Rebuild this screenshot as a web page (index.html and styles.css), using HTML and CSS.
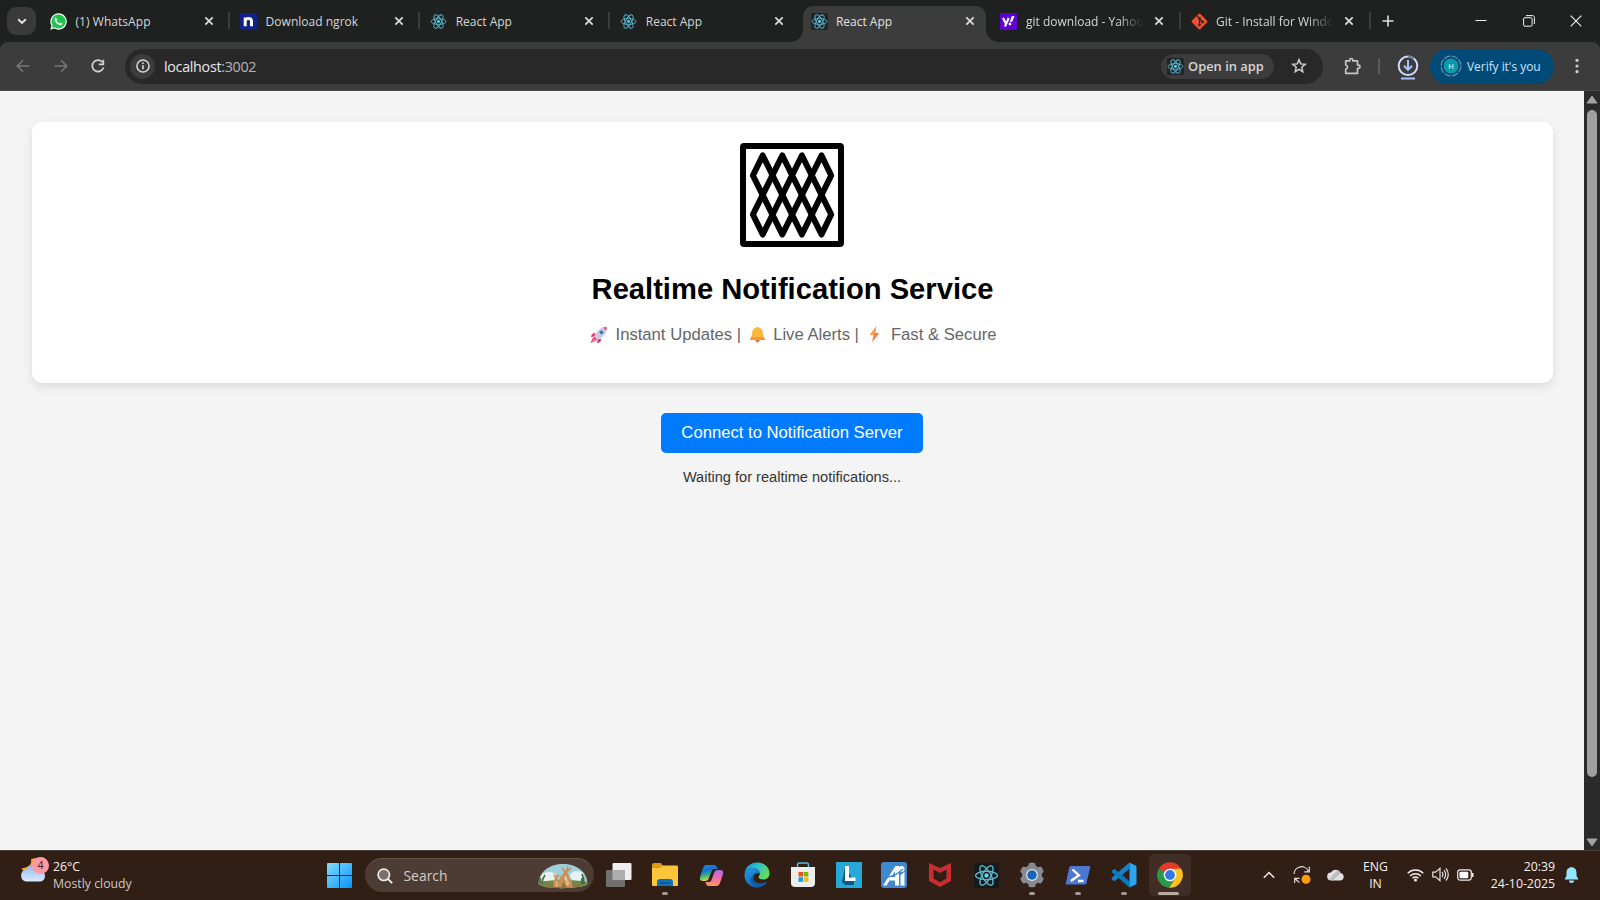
FILE: index.html
```html
<!DOCTYPE html>
<html lang="en">
<head>
<meta charset="utf-8">
<title>React App</title>
<link rel="stylesheet" href="styles.css">
</head>
<body>
<svg class="defs" width="0" height="0" aria-hidden="true">
  <symbol id="react" viewBox="0 0 16 16">
    <g fill="none" stroke="#58b9d2" stroke-width=".85">
      <ellipse cx="8" cy="8" rx="7" ry="2.7"/>
      <ellipse cx="8" cy="8" rx="7" ry="2.7" transform="rotate(60 8 8)"/>
      <ellipse cx="8" cy="8" rx="7" ry="2.7" transform="rotate(120 8 8)"/>
    </g>
    <circle cx="8" cy="8" r="1.4" fill="#6fd0e8"/>
  </symbol>
  <symbol id="close" viewBox="0 0 10 10"><path d="M1.3 1.3l7.4 7.4M8.7 1.3L1.3 8.7" stroke="#dcdcdc" stroke-width="1.7" fill="none"/></symbol>
</svg>

<header class="tabstrip">
  <button class="tab-search"><svg width="10" height="7" viewBox="0 0 10 7"><path d="M1.2 1.3L5 5l3.800-3.700" fill="none" stroke="#e6e6e6" stroke-width="1.900"/></svg></button>
  <nav class="tabs">
    <div class="tab">
      <svg class="fav" viewBox="0 0 17 17"><path d="M8.500.3a8.200 8.200 0 0 0-7.100 12.300L.3 16.700l4.200-1.100A8.200 8.200 0 1 0 8.500.3z" fill="#f2fff4"/><path d="M8.500 1.500a7 7 0 0 0-5.800 10.900L2 15l2.700-.7A7 7 0 1 0 8.500 1.500z" fill="#1fc24d"/><path d="M5.900 4.400c-.8.3-1.500 1.300-1.200 2.500.6 2.500 2.800 4.700 5.300 5.300 1.200.2 2.300-.5 2.400-1.700l-2-1.100-1 1c-1.300-.5-2.200-1.400-2.800-2.700l.8-.9z" fill="#fff"/></svg>
      <span class="tab-title t-wa">(1) WhatsApp</span><svg class="x"><use href="#close"/></svg><i class="sep"></i>
    </div>
    <div class="tab">
      <svg class="fav" viewBox="0 0 17 17"><rect width="17" height="17" rx="1" fill="#10218b"/><path d="M5.200 13.200V4.600M5.200 7.800c.5-3.100 6.300-3.400 6.300.4v5" fill="none" stroke="#fff" stroke-width="3"/></svg>
      <span class="tab-title t-ng">Download ngrok</span><svg class="x"><use href="#close"/></svg><i class="sep"></i>
    </div>
    <div class="tab"><svg class="fav"><use href="#react"/></svg><span class="tab-title">React App</span><svg class="x"><use href="#close"/></svg><i class="sep"></i></div>
    <div class="tab"><svg class="fav"><use href="#react"/></svg><span class="tab-title">React App</span><svg class="x"><use href="#close"/></svg></div>
    <div class="tab active"><svg class="fav dark"><use href="#react"/></svg><span class="tab-title">React App</span><svg class="x"><use href="#close"/></svg></div>
    <div class="tab">
      <svg class="fav" viewBox="0 0 17 17"><rect width="17" height="17" rx="1" fill="#6001d2"/><path d="M3 5l2.700 5.300M8.700 5L5 13.500" fill="none" stroke="#fff" stroke-width="2.100"/><path d="M11.900 3h2.600l-2.300 5.800H9.800z" fill="#fff"/><circle cx="10" cy="11" r="1.400" fill="#fff"/></svg>
      <span class="tab-title fade">git download - Yahoo</span><svg class="x"><use href="#close"/></svg><i class="sep"></i>
    </div>
    <div class="tab">
      <svg class="fav" viewBox="0 0 17 17"><rect x="2.600" y="2.600" width="11.800" height="11.800" rx="1" transform="rotate(45 8.500 8.500)" fill="#f05033"/><path d="M6 2.800l2.500 2.500v7M8.500 6l3 3" fill="none" stroke="#32221f" stroke-width="1.100"/><g fill="#32221f"><circle cx="8.500" cy="5.500" r="1.400"/><circle cx="8.500" cy="12" r="1.400"/><circle cx="11.500" cy="9" r="1.400"/></g></svg>
      <span class="tab-title fade">Git - Install for Windo</span><svg class="x"><use href="#close"/></svg><i class="sep"></i>
    </div>
  </nav>
  <svg class="plus" width="12" height="12" viewBox="0 0 12 12"><path d="M6 .5v11M.5 6h11" stroke="#dedede" stroke-width="1.600"/></svg>
  <div class="winctl">
    <svg width="12" height="12" viewBox="0 0 12 12"><path d="M.5 5.500h11" stroke="#f2f2f2"/></svg>
    <svg width="12" height="12" viewBox="0 0 12 12"><g fill="none" stroke="#f2f2f2"><rect x=".6" y="2.700" width="8.500" height="8.500" rx="1.300"/><path d="M3 .6h6.500c1.200 0 1.900.7 1.900 1.900V9"/></g></svg>
    <svg width="12" height="12" viewBox="0 0 12 12"><path d="M.7.7l10.600 10.600M11.300.7L.7 11.300" stroke="#f2f2f2" stroke-width="1.100"/></svg>
  </div>
</header>

<section class="toolbar">
  <div class="navbtns">
    <svg width="14" height="14" viewBox="0 0 14 14"><path d="M13.300 7H1.300M7 1.200L1.200 7 7 12.800" fill="none" stroke="#777" stroke-width="1.500"/></svg>
    <svg width="14" height="14" viewBox="0 0 14 14"><path d="M.7 7h12M7 1.200L12.800 7 7 12.800" fill="none" stroke="#777" stroke-width="1.500"/></svg>
    <svg width="14" height="14" viewBox="0 0 14 14"><path d="M11.700 3.600A5.700 5.700 0 1 0 12.500 8.500" fill="none" stroke="#d2d2d2" stroke-width="1.700"/><path d="M13.200.7v5.500H7.800V4.600h3.800V.7z" fill="#d2d2d2"/></svg>
  </div>
  <div class="omnibox">
    <span class="info"><svg width="14" height="14" viewBox="0 0 14 14"><circle cx="7" cy="7" r="6.100" fill="none" stroke="#d8d8d8" stroke-width="1.500"/><path d="M7 6.300v4M7 3.400v1.500" stroke="#d8d8d8" stroke-width="1.600"/></svg></span>
    <span class="url">localhost<b>:3002</b></span>
    <button class="openapp"><svg class="fav dark"><use href="#react"/></svg><span>Open in app</span></button>
    <svg class="star" width="16" height="16" viewBox="0 0 16 16"><path d="M8 1.700l1.700 4.200 4.500.4-3.400 3 1 4.400L8 11.400l-3.800 2.300 1-4.400-3.400-3 4.500-.4z" fill="none" stroke="#cfcfcf" stroke-width="1.500"/></svg>
  </div>
  <svg class="ext" width="18" height="18" viewBox="0 0 18 18"><path d="M1.700 3.800h4.100V3a1.500 1.500 0 0 1 3 0v.8h4.700v4.300h.9a1.600 1.600 0 0 1 0 3.200h-.9v5H1.700v-4.100c2.400-.3 2.400-3.900 0-4.200z" fill="none" stroke="#c6c6c6" stroke-width="1.700" stroke-linejoin="round"/></svg>
  <i class="tsep"></i>
  <svg class="dl" width="22" height="25" viewBox="0 0 22 25"><circle cx="11" cy="10.800" r="9.300" fill="none" stroke="#d0dcff" stroke-width="2"/><path d="M11 1.500a9.300 9.300 0 0 1 6 2.100" fill="none" stroke="#777d8c" stroke-width="2"/><path d="M11 5v9.500M6.900 10.700l4.100 4.100 4.100-4.100" fill="none" stroke="#a8c3ff" stroke-width="2"/><path d="M4 23.500h14" stroke="#a8c3ff" stroke-width="2"/></svg>
  <button class="verify"><span class="avatar"><svg width="22" height="22" viewBox="0 0 22 22"><circle cx="11" cy="11" r="9.900" fill="none" stroke="#6b8da8" stroke-width="1.300" stroke-dasharray="6.500 1.300"/><circle cx="11" cy="11" r="7.500" fill="#0c99a8"/></svg><em>H</em></span><span class="vtext">Verify it's you</span></button>
  <svg class="more" width="4" height="16" viewBox="0 0 4 16" fill="#cfcfcf"><circle cx="2" cy="2.300" r="1.600"/><circle cx="2" cy="8" r="1.600"/><circle cx="2" cy="13.700" r="1.600"/></svg>
</section>

<div class="viewport">
  <main class="page">
    <section class="card">
      <svg class="logo" width="104" height="104" viewBox="0 0 104 104"><rect x="3" y="3" width="98" height="98" rx="1" fill="#fff" stroke="#000" stroke-width="6" stroke-linejoin="round"/><g fill="none" stroke="#000" stroke-width="6" stroke-linejoin="round"><path d="M12.900 32.500L22.700 12.500 52 71.500 61.900 91.500 91.200 32.500 81.500 12.500 42.300 91.500 12.900 32.500z"/><path d="M12.900 71.500L42.300 12.500 81.500 91.500 91.200 71.500 61.900 12.500 22.700 91.500z"/></g></svg>
      <h1>Realtime Notification Service</h1>
      <p class="features">
        <svg class="rocket" width="18" height="18" viewBox="0 0 18 18"><path d="M5 6.500L2 8.300.9 11l4-.5zM11.500 12.800L10 16.200l-3 1.100.4-4z" fill="#e9336f"/><path d="M16.900.9C12 .5 7.500 3.500 4 10.800L7.100 14C13.400 11 17.200 7 16.900.9z" fill="#c8cbe0"/><path d="M16.900.9l-3.700.6 2.900 3.100z" fill="#f24674"/><circle cx="11.400" cy="6.300" r="1.900" fill="#3978c9"/><path d="M4.300 10.700l2.900 3L4.900 15 .5 17.200l2-4.800z" fill="#f53976"/><path d="M4 13l1.200 1.100-3.300 2z" fill="#ffb45a"/></svg>
        <span class="f1">Instant Updates |</span>
        <svg class="bell" width="17" height="17" viewBox="0 0 17 17"><circle cx="8.500" cy="14.300" r="2.100" fill="#e47b35"/><path d="M7.200 1.700a1.400 1.400 0 0 1 2.700 0c3.200.6 4 3 4.100 5.800.1 2.700 1.100 4 2.300 6.600H.7c1.200-2.500 2.300-4 2.400-6.600.1-2.800 1-5.200 4.100-5.800z" fill="#fbb83b"/><path d="M.7 14.100c.6-1.200 1.200-2.200 1.700-3.200h12.300l1.600 3.200z" fill="#f29a35"/></svg>
        <span class="f2">Live Alerts |</span>
        <svg class="bolt" width="11" height="17" viewBox="0 0 11 17"><path d="M7 .4L.8 9h3.800L3 16.600 10.300 7H6.500z" fill="#f77e48"/><path d="M7 .4L.8 9h3.800l1-2.800z" fill="#ffa04b"/></svg>
        <span class="f3">Fast &amp; Secure</span>
      </p>
    </section>
    <button class="connect">Connect to Notification Server</button>
    <p class="waiting">Waiting for realtime notifications...</p>
  </main>
  <aside class="scroll">
    <svg width="12" height="9" viewBox="0 0 12 9"><path d="M6 1L11 8H1z" fill="#a2a2a2" stroke="#a2a2a2" stroke-linejoin="round"/></svg>
    <i class="thumb"></i>
    <svg width="12" height="9" viewBox="0 0 12 9"><path d="M6 8L11 1H1z" fill="#a2a2a2" stroke="#a2a2a2" stroke-linejoin="round"/></svg>
  </aside>
</div>

<footer class="taskbar">
  <div class="weather">
    <span class="wicon"><svg width="27" height="27" viewBox="0 0 27 27"><defs><linearGradient id="cl" x2="0" y2="1"><stop stop-color="#8eb7f0"/><stop offset="1" stop-color="#dce9ff"/></linearGradient></defs><path d="M11 3c1.200 6-2.500 8.500-9.500 9.300 3 6 11.500 5.500 14.500 0V2z" fill="#f3a52d"/><path d="M6.500 25.500a6 6 0 0 1-.3-11.900A7.500 7.500 0 0 1 20 14a5.900 5.900 0 0 1 .7 11.500z" fill="url(#cl)"/></svg><b class="badge">4</b></span>
    <div class="wtext"><span>26°C</span><span class="muted">Mostly cloudy</span></div>
  </div>
  <svg class="start" width="25" height="25" viewBox="0 0 25 25"><defs><linearGradient id="win" gradientUnits="userSpaceOnUse" x1="0" y1="0" x2="25" y2="25"><stop stop-color="#80dcff"/><stop offset="1" stop-color="#0a94f5"/></linearGradient></defs><path d="M0 1q0-1 1-1h11v12H0zM13 0h11q1 0 1 1v11H13zM0 13h12v12H1q-1 0-1-1zM13 13h12v11q0 1-1 1H13z" fill="url(#win)"/></svg>
  <div class="search">
    <svg width="16" height="16" viewBox="0 0 16 16"><circle cx="6.800" cy="6.800" r="5.700" fill="#77706b" stroke="#eee" stroke-width="1.700"/><path d="M11 11l4.200 4.200" stroke="#eee" stroke-width="1.900"/></svg>
    <span>Search</span>
    <svg class="kang" width="50" height="26" viewBox="0 0 50 26"><defs><clipPath id="dome"><path d="M.5 21C1 8 12 1 25 1s24 7 24.500 20c-5 5-44 6-49 0z"/></clipPath></defs><g clip-path="url(#dome)"><path fill="#9fcfd8" d="M0 0h50v26H0z"/><g fill="#e9f2f2"><ellipse cx="11" cy="14" rx="8" ry="5"/><ellipse cx="39" cy="13" rx="7" ry="5"/></g><path d="M0 19q25-4 50 0v7H0z" fill="#718747"/><path d="M8 23q16-3 34 0v3H8z" fill="#996d3c"/></g><g fill="#c98f5c"><path d="M27.500 8l-4-5 .3 3 2.400 3.300-4 5.200-2.500 5 1 4.500h4l-1-1.500 2-4 3 6h6l-1-6-3-5.500-1.500-3.500 3.500-3 .8-3.500-3 3.500-.5-4.500z"/><path d="M18 13.200l-2.500-3 .3 3 1.200 1.500-1.500 3.800v5.500h6l-.8-5-1.400-4 1.700-2 .3-2-2 1.700-.5-2z"/></g><path d="M27 12l2 3 .5 5-3-4z" fill="#efcf9d"/><path d="M18 18l1.300 1v4H18z" fill="#ecc38c"/><ellipse cx="29.500" cy="20.500" rx="1.700" ry="2.300" fill="#e9bb82"/><g fill="none" stroke="#4b6b3c" stroke-width="1.700"><path d="M4 21q0-5 3-9M2 20v-5M46 21q0-6-2-10M44 21v-6"/></g></svg>
  </div>
  <div class="apps">
    <div class="app"><svg width="26" height="26" viewBox="0 0 26 26"><rect x="6.500" y="1" width="19" height="17" rx="1" fill="#efefef"/><rect x="0" y="8" width="19" height="17" rx="1" fill="#777" opacity=".92"/><path d="M6.500 8H19v10H6.500z" fill="#adadad"/></svg></div>
    <div class="app run"><svg width="26" height="26" viewBox="0 0 26 26"><path d="M0 3q0-2 2-2h7l2 3v6H0z" fill="#dd9614"/><rect y="3.500" width="26" height="20.500" rx="1" fill="#fdc63a"/><path d="M0 3.500h11L8 6H0z" fill="#dc9818"/><path d="M5 24v-4q0-3 3-3h10q3 0 3 3v4z" fill="#0e71bd"/><path d="M8 20h10v1.500H8z" fill="#07549a"/></svg></div>
    <div class="app"><svg width="25" height="25" viewBox="0 0 25 25"><defs><linearGradient id="c1" x2=".3" y2="1"><stop stop-color="#178ce8"/><stop offset=".4" stop-color="#176fd4"/><stop offset=".7" stop-color="#38b482"/><stop offset="1" stop-color="#f0d23a"/></linearGradient><linearGradient id="c2" x2="0" y2="1"><stop stop-color="#a56de8"/><stop offset=".5" stop-color="#f069b3"/><stop offset="1" stop-color="#ff9a55"/></linearGradient></defs><path d="M7 2h8q3 0 3.500 4H15q-2 0-2.500 2L9.500 16q-1 2-3 2H4q-4 0-3-4L4 5q1-3 3-3z" fill="url(#c1)"/><path d="M18 23h-8q-3 0-3.500-4H10q2 0 2.500-2L15.500 9q1-2 3-2H21q4 0 3 4l-3 9q-1 3-3 3z" fill="url(#c2)"/></svg></div>
    <div class="app"><svg width="26" height="26" viewBox="0 0 26 26"><defs><linearGradient id="e1" x2="1" y2=".5"><stop stop-color="#178bd8"/><stop offset=".5" stop-color="#27c2cf"/><stop offset="1" stop-color="#65dc56"/></linearGradient><linearGradient id="e2" x2=".6" y2="1"><stop stop-color="#229ee2"/><stop offset="1" stop-color="#0f5ebc"/></linearGradient></defs><path d="M.5 12C1 4.500 7 .5 13 .5 21 .5 25.500 6 25.500 11.500c0 4-3 6-6.500 6-3 0-4.500-1.200-4.500-2.500 0-1 1.300-1.400 1.300-3.300C15.800 8 12 6 8.500 6 5 6 1.500 8 .5 12z" fill="url(#e1)"/><path d="M.5 13C1 8.500 4.500 6 8.500 6c4 0 7.300 2.500 7.300 5.700-3-2-6.500.2-6.500 4.300 0 5 6.500 7.500 13.700 3.800C20.500 23.500 17 25.500 13 25.500 6 25.500 0 20 .5 13z" fill="url(#e2)"/><path d="M9.300 16c0 5 6.500 7.500 13.700 3.800-2.500 4-7 5.800-10.500 5.700C8 24 5.500 20 7 16c.8-2.200 2.300-3.500 4-4.500-1 1-1.700 2.500-1.700 4.500z" fill="#125aa9"/></svg></div>
    <div class="app"><svg width="26" height="26" viewBox="0 0 26 26"><path d="M7.500 7V3q0-2 2-2h7q2 0 2 2v4" fill="none" stroke="#4dc1e8" stroke-width="1.500"/><path d="M1 5h24v16q0 4-4 4H5q-4 0-4-4z" fill="#ededed"/><path fill="#f25022" d="M8.500 10H13v4.500H8.500z"/><path fill="#7fba00" d="M13.800 10h4.500v4.500h-4.500z"/><path fill="#00a4ef" d="M8.500 15.300H13v4.500H8.500z"/><path fill="#ffb900" d="M13.800 15.300h4.500v4.500h-4.500z"/></svg></div>
    <div class="app"><svg width="26" height="26" viewBox="0 0 26 26"><path fill="#26a9d6" d="M0 0h26v26H0z"/><path d="M9 5L6 20l3 3h9v-4z" fill="#075a88"/><path d="M9 4h4v11.500h6.500V19H9z" fill="#fff"/></svg></div>
    <div class="app"><svg width="26" height="26" viewBox="0 0 26 26"><rect width="26" height="26" rx="3" fill="#4089cf"/><path d="M2 23.500L14.500 4H18v19.500h-4v-5H8.500l-3 5zM10.500 15H14V9z" fill="#fff" fill-rule="evenodd"/><circle cx="20.500" cy="7" r="3" fill="#fff"/><path d="M19.500 13l4-3v13.500h-4z" fill="#fff"/><path d="M5 15q9 0 17-8" stroke="#4089cf" stroke-width="1.300" fill="none"/></svg></div>
    <div class="app"><svg width="24" height="26" viewBox="0 0 24 26"><path d="M1 1l11 5 11-5v18l-11 6-11-6zM5.500 7.500v9l6.500 3.800 6.500-3.800v-9L12 11z" fill="#c72d31" fill-rule="evenodd"/></svg></div>
    <div class="app"><svg class="bigreact" width="25" height="25"><use href="#react"/></svg></div>
    <div class="app run"><svg width="26" height="26" viewBox="0 0 26 26"><g fill="#858a91"><circle cx="13" cy="13" r="10"/><g id="teeth"><rect x="9.500" y=".8" width="7" height="24.400" rx="2"/></g><use href="#teeth" transform="rotate(60 13 13)"/><use href="#teeth" transform="rotate(120 13 13)"/></g><circle cx="13" cy="13" r="6" fill="#dfe3e8"/><circle cx="13" cy="13" r="4.700" fill="#1764b4"/></svg></div>
    <div class="app run"><svg width="26" height="26" viewBox="0 0 26 26"><path d="M6 4h18q1.500 0 1.200 1.500L21.500 21q-.4 1.500-2 1.500H1.800Q.5 22.500.8 21L4.300 5.500Q4.700 4 6 4z" fill="#4b78d1"/><path d="M7.500 7.500l6.500 5.800L5.800 19M13 19h5.500" fill="none" stroke="#fff" stroke-width="2.300"/></svg></div>
    <div class="app run"><svg width="26" height="26" viewBox="0 0 26 26"><path d="M18.500.5v6.300L3.500 19.300.7 17.200v-1.400z" fill="#1682cc"/><path d="M18.500 25.500v-6.300L3.500 6.700.7 8.800v1.400z" fill="#087abf"/><path d="M18.500.5l6.200 3q.8.400.8 1.300v16.400q0 .9-.8 1.300l-6.200 3z" fill="#2ba6f0"/></svg></div>
    <div class="app current"><svg width="26" height="26" viewBox="0 0 26 26"><circle cx="13" cy="13" r="12.700" fill="#e33b2e"/><path d="M13 13L2 6.700A12.700 12.700 0 0 0 12.300 25.700l6.200-9.500z" fill="#269c4a"/><path d="M13 6.800h11.100A12.700 12.700 0 0 1 12.300 25.700L18.500 16z" fill="#fbc31b"/><circle cx="13" cy="13" r="6.300" fill="#fff"/><circle cx="13" cy="13" r="4.900" fill="#3478e5"/></svg></div>
  </div>
  <div class="tray">
    <svg class="chev" width="12" height="8" viewBox="0 0 12 8"><path d="M.8 6.800L6 1.500l5.200 5.300" fill="none" stroke="#eee" stroke-width="1.500"/></svg>
    <svg class="sync" width="18" height="18" viewBox="0 0 18 18"><path d="M1 8A7.500 7.500 0 0 1 15.500 5.500M16.300.8v5h-5M6.500 16.500A7.500 7.500 0 0 1 2.500 12.500M1.700 17v-4.600h4.800" fill="none" stroke="#ddd" stroke-width="1.200"/><circle cx="13" cy="13.300" r="4.500" fill="#ff9c0a"/></svg>
    <svg class="cloud" width="18" height="12" viewBox="0 0 18 12"><path d="M4.500 11.500a4 4 0 0 1-.6-8A5.300 5.300 0 0 1 13.500 4a3.800 3.800 0 0 1 0 7.500z" fill="#e2e2e2"/><path d="M6 11.500l7.500-7.500a6 6 0 0 0-3-3L2 10z" fill="#bdbdbd"/></svg>
    <div class="lang"><span>ENG</span><span>IN</span></div>
    <svg class="wifi" width="17" height="14" viewBox="0 0 17 14"><g fill="none" stroke="#eee" stroke-width="1.400"><path d="M.7 5.300a11 11 0 0 1 15.600 0M3.100 7.900a7.700 7.700 0 0 1 10.800 0M5.500 10.300a4.200 4.200 0 0 1 6 0"/></g><circle cx="8.500" cy="12" r="1.600" fill="#eee"/></svg>
    <svg class="vol" width="17" height="15" viewBox="0 0 17 15"><g fill="none" stroke="#e2e2e2" stroke-width="1.200"><path d="M.8 5.200h2.700L8 1.300v12.400L3.500 9.800H.8zM10 5q1.700 2.500 0 5M12 3.200q3.200 4.300 0 8.600M14 1.300q4.500 6.200 0 12.400"/></g></svg>
    <svg class="bat" width="17" height="12" viewBox="0 0 17 12"><rect x=".7" y=".9" width="13.600" height="10.200" rx="2.500" fill="none" stroke="#eee" stroke-width="1.200"/><rect x="2.500" y="2.700" width="8.800" height="6.600" rx="1" fill="#fff"/><path d="M15.700 4v4" stroke="#eee" stroke-width="1.600"/></svg>
    <div class="clock"><span>20:39</span><span>24-10-2025</span></div>
    <svg class="nbell" width="15" height="16" viewBox="0 0 15 16"><path d="M7.500.3c3.200 0 5 2.300 5 5.200v3.300l2 3.800H.5l2-3.800V5.500c0-2.900 1.800-5.200 5-5.200zM5 13.500h5a2.500 2.500 0 0 1-5 0z" fill="#94e6ff"/></svg>
  </div>
</footer>
</body>
</html>
```

FILE: styles.css
```css
* { box-sizing: border-box; }
body { margin: 0; width: 1600px; height: 900px; overflow: hidden; display: flex; flex-direction: column; background: #1f2120; font-family: "Open Sans", "Noto Sans", sans-serif; font-size: 12px; color: #d6d6d6; }
button { border: 0; margin: 0; padding: 0; font: inherit; color: inherit; background: none; }
svg { flex: none; display: block; }
i, b, em { font-style: normal; font-weight: inherit; }
.defs { position: absolute; }

/* tab strip */
.tabstrip { height: 42px; flex: none; display: flex; background: #1f2120; }
.tab-search { flex: none; width: 29px; height: 28px; margin: 7px 4px 0 7px; border-radius: 9px; background: #3a3a3a; display: flex; align-items: center; justify-content: center; }
.tabs { display: flex; }
.tab { position: relative; width: 190.100px; height: 36px; margin-top: 6px; padding: 0 0 6px 10px; display: flex; align-items: center; }
.fav { width: 17px; height: 17px; }
.dark { background: #202426; border-radius: 2px; }
.tab-title { width: 121px; margin-left: 8.500px; white-space: nowrap; line-height: 18px; padding-top: 1px; }
.t-wa { letter-spacing: .05px; }
.t-ng { letter-spacing: .02px; }
.fade { -webkit-mask-image: linear-gradient(90deg, #000 78px, #000 92px, transparent 117px); mask-image: linear-gradient(90deg, #000 78px, #000 92px, transparent 117px); }
.x { width: 10px; height: 10px; margin-left: 7px; }
.sep { position: absolute; right: 0; top: 6px; width: 2px; height: 17px; background: #3c3c3c; }
.active { background: #3c3c3c; width: 183px; margin-left: 2.500px; margin-right: 4.600px; padding-left: 8px; border-radius: 10px 10px 0 0; color: #e2e2e2; }
.active .tab-title { margin-left: 8px; width: 120px; }
.active .x { margin-left: 9px; }
.active::before, .active::after { content: ""; position: absolute; bottom: 0; width: 12px; height: 12px; }
.active::before { left: -12px; background: radial-gradient(circle at 0 0, transparent 11.500px, #3c3c3c 12px); }
.active::after { right: -12px; background: radial-gradient(circle at 100% 0, transparent 11.500px, #3c3c3c 12px); }
.plus { margin: 15px 0 0 11px; }
.winctl { margin: 15px 18px 0 auto; display: flex; gap: 35.500px; }

/* toolbar */
.toolbar { height: 49px; flex: none; display: flex; align-items: center; background: #3c3c3c; border-radius: 8px 8px 0 0; border-bottom: 1px solid #4b4b4b; }
.navbtns { display: flex; gap: 23.500px; width: 125px; padding-left: 16px; flex: none; }
.omnibox { width: 1198px; height: 35px; border-radius: 18px; background: #282828; display: flex; align-items: center; flex: none; padding-left: 5px; }
.info { width: 25px; height: 25px; border-radius: 50%; background: #3c3c3c; display: flex; align-items: center; justify-content: center; }
.url { margin-left: 9px; font-size: 14.300px; letter-spacing: -.3px; color: #e8e8e8; flex: 1; }
.url b { color: #b5b5b5; }
.openapp { width: 113px; height: 25px; border-radius: 13px; background: #3c3c3c; display: flex; align-items: center; padding-left: 6px; gap: 4px; font-weight: 600; font-size: 12.900px; white-space: nowrap; }
.star { margin: 0 16px 0 17px; }
.ext { margin-left: 20.500px; }
.tsep { width: 2px; height: 16px; background: #5b5b5b; margin-left: 16.500px; }
.dl { margin: 3px 0 0 17px; }
.verify { width: 124px; height: 35px; border-radius: 18px; background: #004a77; margin-left: 11px; display: flex; align-items: center; padding-left: 10px; color: #c9e6ff; flex: none; }
.avatar { position: relative; width: 22px; height: 22px; }
.avatar em { position: absolute; inset: 0; line-height: 22px; text-align: center; font-size: 7.500px; color: #fff; }
.vtext { margin-left: 5px; white-space: nowrap; letter-spacing: -.05px; }
.more { margin-left: 21px; }

/* page */
.viewport { height: 759px; flex: none; display: flex; }
.page { width: 1584px; background: #f4f4f4; padding: 31px 31px 0 32px; font-family: Arial, "Liberation Sans", sans-serif; display: flex; flex-direction: column; align-items: center; }
.card { width: 1521px; height: 260.500px; border-radius: 10px; background: #fff; box-shadow: 0 4px 10px rgba(0,0,0,.1); display: flex; flex-direction: column; align-items: center; padding-top: 21px; }
.logo { margin-right: 2px; }
h1 { margin: 24px 0 0; font-size: 29.170px; line-height: 36px; color: #000; white-space: nowrap; }
.features { margin: 18px 0 0; width: 406px; display: flex; font-size: 16.670px; line-height: 20px; color: #666; white-space: nowrap; }
.rocket { margin: 1px 8px 0 0; }
.bell { margin: 1px 7px 0 8px; }
.bolt { margin: 1px 11px 0 10px; }
.connect { margin: 30.500px 1px 0 0; width: 262px; height: 40px; border-radius: 5px; background: #007bff; color: #fff; font-size: 16.670px; line-height: 40px; white-space: nowrap; }
.waiting { margin: 14px 1px 0 0; font-size: 14.580px; line-height: 20px; color: #333; white-space: nowrap; }
.scroll { width: 16px; background: #2b2b2b; display: flex; flex-direction: column; align-items: center; padding: 4px 0 3px; }
.thumb { width: 10px; height: 667px; margin: 6px 0 auto; border-radius: 5px; background: #9f9f9f; }

/* taskbar */
.taskbar { height: 50px; flex: none; background: #311e14; border-top: 1px solid #46403a; display: flex; color: #f5f2f0; }
.weather { width: 327px; display: flex; padding: 5px 0 0 20px; flex: none; }
.wicon { position: relative; width: 27px; height: 27px; }
.badge { position: absolute; left: 12px; top: 1px; width: 17px; height: 17px; border-radius: 50%; background: #ff99a4; color: #3a2020; line-height: 17px; text-align: center; font-size: 10.500px; }
.wtext { display: flex; flex-direction: column; margin: 2px 0 0 6px; font-size: 12.300px; line-height: 17px; white-space: nowrap; }
.muted { color: #cfc8c4; }
.start { margin-top: 12px; }
.search { width: 229px; height: 34px; margin: 7px 2px 0 13px; flex: none; border-radius: 17px; background: #4c3c33; border-top: 1px solid #63544c; display: flex; align-items: center; padding-left: 12px; font-size: 13.900px; color: #d5cdc8; }
.search span { margin-left: 10.500px; flex: 1; }
.kang { margin-right: 6px; }
.apps { display: flex; margin-left: .5px; }
.app { position: relative; width: 45.850px; height: 42px; margin-top: 3px; display: flex; align-items: center; justify-content: center; }
.run::after, .current::after { content: ""; position: absolute; bottom: 1px; left: 50%; margin-left: -3px; width: 6px; height: 3px; border-radius: 2px; background: #a29a95; }
.current { width: 42px; margin-left: 2px; background: #402e26; border-radius: 5px; }
.current::after { width: 21px; margin-left: -12px; background: #b5aaa4; }
.bigreact { background: #17191b; }
.tray { margin-left: auto; display: flex; align-items: center; padding-right: 21.500px; font-size: 12.300px; line-height: 16.500px; white-space: nowrap; }
.tray > svg { margin-top: -1.500px; }
.lang, .clock { display: flex; flex-direction: column; margin-top: 0; }
.sync { margin-left: 18px; }
.cloud { margin-left: 16px; }
.lang { width: 26px; margin-left: 18px; align-items: center; }
.wifi { margin-left: 18px; }
.vol { margin-left: 8px; }
.bat { margin-left: 8px; }
.clock { width: 67px; margin-left: 14.500px; align-items: flex-end; }
.nbell { margin-left: 8.500px; }
```
